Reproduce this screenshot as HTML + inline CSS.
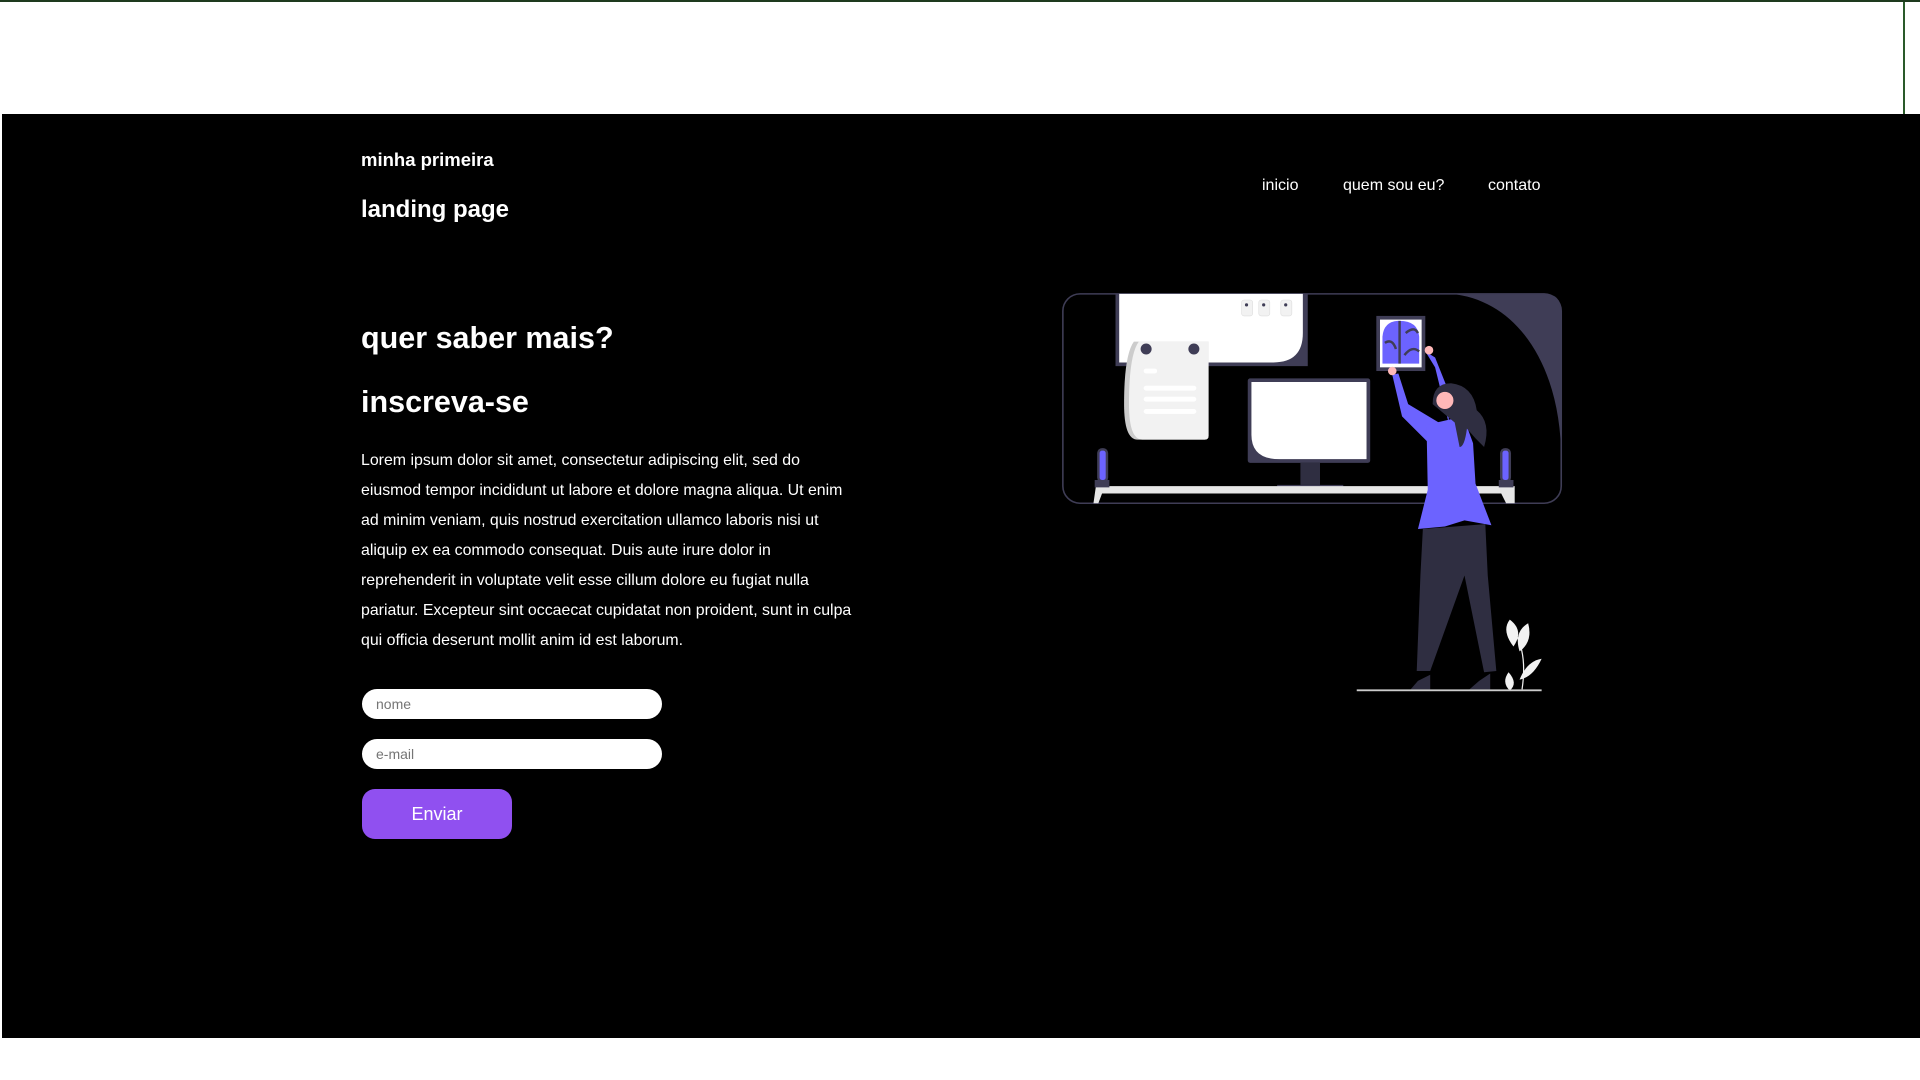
<!DOCTYPE html>
<html><head><meta charset="utf-8"><style>
*{margin:0;padding:0;box-sizing:border-box}
html,body{width:1920px;height:1080px;overflow:hidden;background:#fff;font-family:"Liberation Sans",sans-serif}
.topline{position:absolute;left:0;top:0;width:1920px;height:2px;background:#1e3a1e}
.vline{position:absolute;left:1903px;top:2px;width:2px;height:112px;background:#2a5a2a}
.band{position:absolute;left:2px;top:114px;width:1918px;height:924px;background:#000}
.t{position:absolute;color:#fff;white-space:nowrap}
.logo1{left:361px;top:149px;font-size:18.5px;font-weight:bold}
.logo2{left:361px;top:196px;font-size:24px;font-weight:bold}
.nav{top:177px;font-size:16px}
.h{left:361px;font-size:30.5px;font-weight:bold}
.p{position:absolute;left:361px;top:446px;color:#fff;font-size:15.9px;line-height:30px;white-space:nowrap}
.in{position:absolute;left:362px;width:300px;height:30px;background:#fff;border-radius:15px;color:#757575;font-size:14px;padding-left:14px;line-height:30px}
.btn{position:absolute;left:362px;top:789px;width:150px;height:50px;background:#9050f0;border-radius:13px;color:#fff;font-size:18px;text-align:center;line-height:50px}
svg{position:absolute;left:0;top:0}
</style></head><body>
<div class="topline"></div>
<div class="vline"></div>
<div class="band"></div>
<div class="t logo1">minha primeira</div>
<div class="t logo2">landing page</div>
<div class="t nav" style="left:1262px">inicio</div>
<div class="t nav" style="left:1343px">quem sou eu?</div>
<div class="t nav" style="left:1488px">contato</div>
<div class="t h" style="top:321px">quer saber mais?</div>
<div class="t h" style="top:385px">inscreva-se</div>
<div class="p">Lorem ipsum dolor sit amet, consectetur adipiscing elit, sed do<br>eiusmod tempor incididunt ut labore et dolore magna aliqua. Ut enim<br>ad minim veniam, quis nostrud exercitation ullamco laboris nisi ut<br>aliquip ex ea commodo consequat. Duis aute irure dolor in<br>reprehenderit in voluptate velit esse cillum dolore eu fugiat nulla<br>pariatur. Excepteur sint occaecat cupidatat non proident, sunt in culpa<br>qui officia deserunt mollit anim id est laborum.</div>
<div class="in" style="top:689px">nome</div>
<div class="in" style="top:739px">e-mail</div>
<div class="btn">Enviar</div>
<svg width="1920" height="1080" viewBox="0 0 1568 882">
<path d="M1185 240 L1261 240 Q1275 240 1275 254 L1275 375 C1275 300 1240 245 1185 240 Z" fill="#3f3d56"/>
<rect x="868" y="240" width="407" height="171" rx="14" fill="none" stroke="#3f3d56" stroke-width="1.3"/>
<rect x="911" y="240" width="157" height="59" fill="#3f3d56"/>
<path d="M914 240 H1064 V272 Q1064 296 1040 296 H914 Z" fill="#fff"/>
<g fill="#f2f2f2" stroke="#ddd" stroke-width=".5"><rect x="1014" y="245" width="9" height="13" rx="2"/><rect x="1028" y="245" width="9" height="13" rx="2"/><rect x="1046" y="245" width="9" height="13" rx="2"/></g>
<g fill="#3f3d56"><circle cx="1018" cy="249" r="1.3"/><circle cx="1032" cy="249" r="1.3"/><circle cx="1050" cy="249" r="1.3"/></g>
<path d="M926 279 H987 V356 Q987 359 984 359 H929 Q918 359 918 330 Q918 290 926 279 Z" fill="#ccc"/>
<path d="M930 279 H987 V356 Q987 359 984 359 H933 Q922 359 922 330 Q922 290 930 279 Z" fill="#f2f2f2"/>
<circle cx="936" cy="285" r="4.5" fill="#3f3d56"/><circle cx="975" cy="285" r="4.5" fill="#3f3d56"/>
<g stroke="#fff" stroke-width="4" stroke-linecap="round"><path d="M936 303H943M936 317H975M936 326H975M936 336H975"/></g>
<rect x="1019" y="309" width="100" height="69" rx="2" fill="#3f3d56"/>
<path d="M1022 312 H1116 V375 H1045 Q1022 375 1022 355 Z" fill="#fff"/>
<rect x="1062" y="378" width="16" height="18" fill="#2f2e41"/>
<rect x="1043" y="396" width="54" height="6" fill="#3f3d56"/>
<path d="M895 397 H1237 V411 H1230 L1226 403 H900 L897 411 H893 Z" fill="#e6e6e6"/>
<rect x="896" y="366" width="9" height="28" rx="4" fill="#3f3d56"/><rect x="898" y="368" width="5" height="24" rx="2" fill="#6c63ff"/>
<rect x="1225" y="366" width="9" height="28" rx="4" fill="#3f3d56"/><rect x="1227" y="368" width="5" height="24" rx="2" fill="#6c63ff"/>
<path d="M894 392 h12 v6 h-12z M1224 392 h12 v6 h-12z" fill="#3f3d56"/>
<rect x="1124" y="258" width="40" height="45" fill="#3f3d56"/>
<rect x="1127" y="261" width="34" height="39" fill="#fff"/>
<path d="M1129 275 Q1130 262 1143 262 Q1158 262 1159 275 V297 H1129 Z" fill="#6c63ff"/>
<path d="M1143 262 V297 M1131 280 Q1137 276 1140 285 M1148 272 Q1155 266 1158 272 M1147 290 Q1153 282 1159 287" stroke="#3f3d56" stroke-width="2" fill="none"/>
<path d="M1137 306 L1145 340 L1172 367 L1175 345 L1150 330 L1142 305 Z" fill="#6c63ff"/>
<path d="M1164 287 L1172 292 L1184 322 L1183 345 L1172 300 Z" fill="#6c63ff"/>
<circle cx="1137" cy="303" r="3.5" fill="#ffb8b8"/><circle cx="1167" cy="286" r="3.5" fill="#ffb8b8"/>
<path d="M1165 347 L1195 340 L1203 362 L1205 395 L1218 429 L1196 425 L1180 430 L1158 432 L1166 400 Z" fill="#6c63ff"/>
<path d="M1170 330 Q1170 313 1185 313 Q1203 315 1206 335 Q1218 345 1212 365 L1205 358 L1198 350 Q1196 365 1192 365 L1188 345 Z" fill="#2f2e41"/>
<circle cx="1180" cy="327" r="7" fill="#ffb8b8"/>
<path d="M1162 432 L1213 428 L1215 470 L1222 548 L1212 549 L1196 470 L1168 548 L1157 548 L1160 470 Z" fill="#2f2e41"/>
<path d="M1158 556 L1168 551 L1168 563 L1152 563 Z M1208 556 L1217 550 L1217 563 L1200 563 Z" fill="#2f2e41"/>
<g fill="#f2f2f2"><path d="M1233 506 Q1245 515 1236 528 Q1226 515 1233 506Z"/><path d="M1248 509 Q1252 524 1241 532 Q1236 516 1248 509Z"/><path d="M1259 538 Q1252 553 1241 555 Q1247 540 1259 538Z"/><path d="M1232 549 Q1240 558 1233 564 Q1226 557 1232 549Z"/></g>
<path d="M1234 512 Q1248 530 1243 563" stroke="#f2f2f2" stroke-width="1" fill="none"/>
<rect x="1108" y="563" width="151" height="1.5" fill="#ccc"/>
</svg>
</body></html>
